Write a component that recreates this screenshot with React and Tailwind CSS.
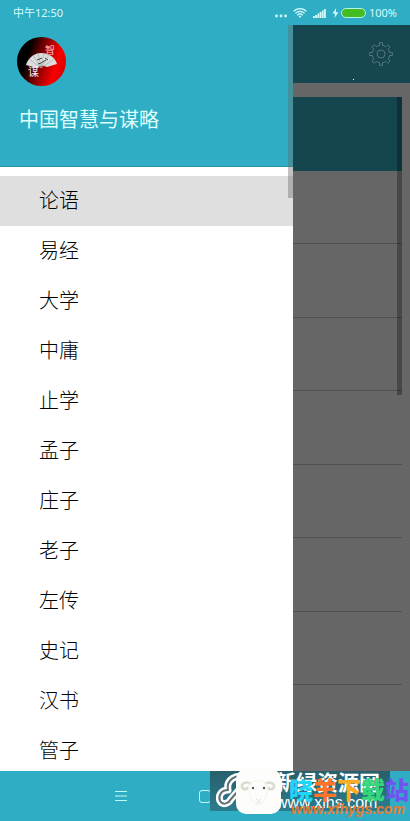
const books = ['论语', '易经', '大学', '中庸', '止学', '孟子', '庄子', '老子', '左传', '史记', '汉书', '管子'];
const rows = [1, 2, 3, 4, 5, 6, 7, 8];

function StatusBar() {
  return (
    <div className="h-[25px] shrink-0 flex items-center justify-between px-[13px] text-[#d5fbfb] text-[11px] leading-4 font-['Noto_Sans','Noto_Sans_CJK_SC',sans-serif]">
      <span>中午12:50</span>
      <div className="flex items-center">
        <svg className="w-3 h-3 mr-[6px]" viewBox="0 0 12 12" fill="currentColor">
          <circle cx="1.5" cy="9" r="1.4" />
          <circle cx="6" cy="9" r="1.4" />
          <circle cx="10.5" cy="9" r="1.4" />
        </svg>
        <svg className="w-[14px] h-3 mr-[6px]" viewBox="0 0 14 12" fill="none" stroke="currentColor" strokeWidth="1.3">
          <path d="M0.6 4.4C4 0.6 10 0.6 13.4 4.4" />
          <path d="M2.4 6.4C5 3.6 9 3.6 11.6 6.4" />
          <path d="M4.2 8.2C6 6.4 8 6.4 9.8 8.2" />
          <path d="M5.6 9.2L7 8.4L8.4 9.2L7 11Z" fill="currentColor" stroke="none" />
        </svg>
        <svg className="w-[13px] h-3 mr-[6px]" viewBox="0 0 13 12" fill="currentColor">
          <rect x="0" y="9" width="1.8" height="2" />
          <rect x="2.2" y="8" width="1.8" height="3" />
          <rect x="4.4" y="6.5" width="1.8" height="4.5" />
          <rect x="6.6" y="5" width="1.8" height="6" />
          <rect x="8.8" y="3.5" width="1.8" height="7.5" />
          <rect x="11" y="2" width="1.8" height="9" />
        </svg>
        <svg className="w-[7px] h-3 mr-[2px]" viewBox="0 0 7 12" fill="currentColor">
          <path d="M4.2 1L0.5 6.6H3L2.4 11L6.5 5.2H3.8Z" />
        </svg>
        <span className="w-[25px] h-[10px] rounded-full border border-[#b5f2e4] bg-[#43bd22] mr-[3px]" />
        <span>100%</span>
      </div>
    </div>
  );
}

function Logo() {
  return (
    <svg className="w-[49px] h-[49px]" viewBox="0 0 49 49">
      <defs>
        <linearGradient id="disc" x1="0" y1="0.35" x2="1" y2="0.65">
          <stop offset="0.2" stopColor="#000" />
          <stop offset="0.5" stopColor="#8c0000" />
          <stop offset="0.8" stopColor="#fa0000" />
          <stop offset="1" stopColor="#d80000" />
        </linearGradient>
      </defs>
      <circle cx="24.5" cy="24.5" r="24.5" fill="url(#disc)" />
      <path d="M24 32L9 28C11 21 17 16 24 16C32 16 38 20 40 27L30 30Q24 27 20 31Z" fill="#dcdede" />
      <path d="M24 31L12 22M24 31L16 18M24 31L21 16M24 31L27 16M24 31L32 18M24 31L37 22" stroke="#9da2a4" strokeWidth="0.6" />
      <path d="M20 23l5-2M24 26l5-3M28 21l3 2M21 27l3-1" stroke="#444" strokeWidth="1" />
      <text x="28" y="17" fontSize="10" fontWeight="500" fill="#ff9b9b">智</text>
      <text x="11" y="39" fontSize="11" fill="#f2f2f2">谋</text>
    </svg>
  );
}

function Drawer() {
  return (
    <aside className="relative w-[293px] shrink-0 bg-white overflow-hidden">
      <header className="h-[142px] bg-[#2eadc4] border-b border-[#2791a5] pt-3 pl-[17px]">
        <Logo />
        <h1 className="mt-5 pl-[2px] text-[20px] leading-7 text-[#dcffff]">中国智慧与谋略</h1>
      </header>
      <nav className="pt-[9px]">
        {books.map((book, i) => (
          <a
            key={book}
            href="#"
            className={`flex items-center h-[50px] pl-[39px] text-[20px] font-light text-black ${i === 0 ? 'bg-[#dfdfdf]' : ''}`}
          >
            {book}
          </a>
        ))}
      </nav>
      <div className="absolute top-0 right-0 w-[5px] h-[173px] bg-[#666]/40" />
    </aside>
  );
}

function GearIcon() {
  return (
    <svg className="w-6 h-6" viewBox="0 0 24 24" fill="none" stroke="#55787f" strokeWidth="1" strokeLinejoin="round">
      <path d="M10.500 0.600h3v2.800q2 0.300 3.300 1.300l2-2 2.300 2.300-1.900 2q1.100 1.600 1.300 3.500h2.900v3h-2.900q-0.200 1.900-1.300 3.500l1.900 2-2.300 2.300-2-2q-1.300 1-3.300 1.300v2.800h-3v-2.800q-2-0.300-3.300-1.300l-2 2-2.300-2.300 1.900-2q-1.100-1.600-1.300-3.500h-2.900v-3h2.900q0.200-1.900 1.300-3.500l-1.900-2 2.300-2.300 2 2q1.300-1 3.300-1.300z" />
      <circle cx="12" cy="12" r="4" />
    </svg>
  );
}

function DimmedPage() {
  return (
    <main className="flex-1 min-w-0 flex flex-col bg-[#666]">
      <div className="relative h-[58px] shrink-0 bg-[#16464f] flex items-center justify-end pr-[17px]">
        <button type="button" aria-label="设置">
          <GearIcon />
        </button>
        <span className="absolute right-14 bottom-[3px] w-px h-px bg-white" />
      </div>
      <div className="relative flex-1 mt-[14px] mb-3 mr-2 grid auto-rows-fr">
        <div className="bg-[#15454f]" />
        {rows.map((row) => (
          <div key={row} className={row < rows.length ? 'border-b border-[#505050]' : ''} />
        ))}
        <div className="absolute top-0 right-0 w-[5px] h-[298px] bg-black/30" />
      </div>
    </main>
  );
}

function SheepLogo() {
  return (
    <svg className="absolute left-[26px] -top-[2px] w-[45px] h-[45px]" viewBox="0 0 45 45" fill="none">
      <rect width="45" height="45" rx="10" fill="#fdfdfb" />
      <path d="M15 15C11 12 5 14 6 18C7 21 11 21 12 18" stroke="#dcdacd" strokeWidth="2.5" />
      <path d="M29 15C33 12 39 14 38 18C37 21 33 21 32 18" stroke="#dcdacd" strokeWidth="2.5" />
      <path d="M13 15Q22 8 31 15Q32 28 26 34Q22 37 18 34Q12 28 13 15Z" stroke="#f5f3ec" />
      <circle cx="17" cy="19" r="1.2" fill="#555" />
      <circle cx="28" cy="19" r="1.2" fill="#555" />
      <path d="M20 30l2.500 2l2.500-2M22.500 32l-2 3M22.500 32l2 3" stroke="#eadfd6" />
    </svg>
  );
}

function SiteBadges() {
  return (
    <div className="absolute right-0 top-0 w-[200px] h-[50px]">
      <div className="relative w-[180px] h-10 bg-linear-to-b from-[#285f6c] to-[#2b7c8e] text-white">
        <svg className="absolute left-[6px] top-[1px] w-[34px] h-9" viewBox="0 0 34 36" fill="none" strokeLinecap="round" strokeLinejoin="round">
          <path d="M30 6C20 1 10 8 12 18C5 18 2 24 4 29C7 34 13 31 15 27L22 19" stroke="#fff" strokeWidth="7" />
          <path d="M30 6C20 1 10 8 12 18C5 18 2 24 4 29C7 34 13 31 15 27L22 19" stroke="#5f7075" strokeWidth="2" />
        </svg>
        <span className="absolute left-[65px] top-0 text-[21px] leading-6 font-bold whitespace-nowrap">新绿资源网</span>
        <span className="absolute left-[66px] top-[22px] text-[16px] leading-5 whitespace-nowrap">www.xihs.com</span>
      </div>
      <SheepLogo />
      <div className="absolute left-[79px] top-[6px] text-[24px] leading-7 font-black whitespace-nowrap">
        <span className="text-[#20d5f5]">晓</span>
        <span className="text-[#ff7426]">羊</span>
        <span className="text-[#ffac25]">下</span>
        <span className="text-[#35d77c]">载</span>
        <span className="text-[#6f55ef]">站</span>
      </div>
      <span className="absolute left-[81px] top-[28px] text-[14px] leading-5 font-bold italic text-[#e47b32] whitespace-nowrap">
        www.xfhygs.com
      </span>
    </div>
  );
}

function NavBar() {
  return (
    <footer className="relative h-[50px] shrink-0 flex items-center text-[#c5fafa]">
      <button type="button" aria-label="菜单" className="ml-[115px]">
        <svg className="w-3 h-3" viewBox="0 0 12 12" stroke="currentColor" strokeWidth="1.200">
          <path d="M0 1.500H12M0 6H12M0 10.500H12" />
        </svg>
      </button>
      <button type="button" aria-label="主页" className="ml-[72px] w-3 h-[13px] rounded-[3px] border border-current" />
      <SiteBadges />
    </footer>
  );
}

export default function App() {
  return (
    <div className="h-screen flex flex-col overflow-hidden bg-[#2eadc4] font-['Liberation_Sans','Noto_Sans_CJK_SC',sans-serif]">
      <StatusBar />
      <div className="flex-1 min-h-0 flex">
        <Drawer />
        <DimmedPage />
      </div>
      <NavBar />
    </div>
  );
}
